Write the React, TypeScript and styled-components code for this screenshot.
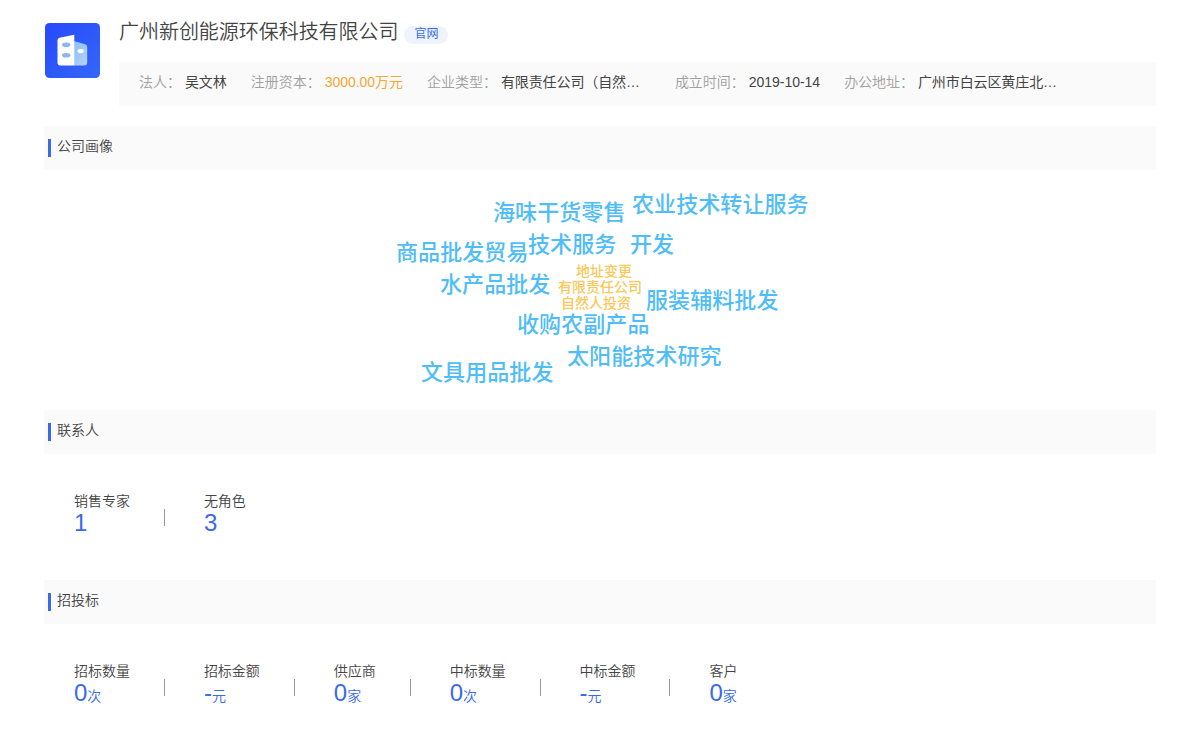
import React from "react";
import styled, { createGlobalStyle } from "styled-components";

const GlobalStyle = createGlobalStyle`
  * { box-sizing: border-box; }
  body {
    margin: 0;
    background: #fff;
    color: #444;
    font-family: "Liberation Sans", "Noto Sans CJK SC", sans-serif;
    font-size: 14px;
    line-height: 20px;
  }
`;

const Page = styled.main`
  width: 1200px;
  height: 752px;
  padding: 20px 44px 0;
  overflow: hidden;
`;

const Header = styled.header`
  display: flex;
  height: 86px;
`;

const Logo = styled.svg`
  width: 55px;
  height: 55px;
  margin: 3px 19px 0 1px;
  flex: none;
`;

const Summary = styled.div`
  flex: 1;
  min-width: 0;
`;

const TitleRow = styled.div`
  display: flex;
  align-items: flex-start;
  height: 42px;
`;

const Title = styled.h1`
  margin: 0;
  font-size: 20px;
  line-height: 24px;
  font-weight: 350;
  letter-spacing: -0.04px;
  color: #444;
`;

const SiteTag = styled.span`
  margin: 6px 0 0 6px;
  width: 44px;
  height: 18px;
  border-radius: 9px;
  background: #eef4fd;
  color: #3a6aea;
  font-size: 12px;
  line-height: 17px;
  text-align: center;
`;

const InfoBar = styled.div`
  display: flex;
  gap: 24px;
  height: 44px;
  padding: 10px 20px;
  background: #fafafa;
  white-space: nowrap;
`;

const InfoItem = styled.div`
  display: flex;
  gap: 4px;
`;

const InfoLabel = styled.span`
  color: #a0a0a0;
  font-weight: 350;
  letter-spacing: -0.04px;
`;

const InfoValue = styled.span<{ $accent?: boolean; $clipped?: boolean }>`
  color: ${(p) => (p.$accent ? "#f5a633" : "#444")};
  width: ${(p) => (p.$clipped ? "150px" : "auto")};
  letter-spacing: ${(p) => (p.$clipped ? "-0.1px" : "-0.02px")};
`;

const SectionTitle = styled.h2`
  display: flex;
  height: 44px;
  margin: 0;
  padding: 10px 4px;
  gap: 6px;
  background: #fafafa;
  font-size: 14px;
  font-weight: 350;
  line-height: 20px;
  color: #444;

  &::before {
    content: "";
    width: 3px;
    height: 18px;
    margin-top: 3px;
    background: #3a6aea;
  }
`;

const Section = styled.section<{ $height: number; $top?: number }>`
  height: ${(p) => p.$height}px;
  margin-top: ${(p) => p.$top ?? 0}px;
`;

const Cloud = styled.div`
  position: relative;
  height: 240px;
`;

const Word = styled.span<{ $x: number; $y: number; $small?: boolean }>`
  position: absolute;
  left: ${(p) => p.$x}px;
  top: ${(p) => p.$y}px;
  transform: translateY(-50%);
  white-space: nowrap;
  font-weight: 500;
  font-size: ${(p) => (p.$small ? 14 : 22)}px;
  line-height: ${(p) => (p.$small ? 16 : 24)}px;
  letter-spacing: ${(p) => (p.$small ? 0 : 0.08)}px;
  color: ${(p) => (p.$small ? "#fac858" : "#4fbdf8")};
`;

const StatRow = styled.div`
  display: flex;
  padding: 37px 30px 0;
`;

const Stat = styled.div`
  display: flex;
  font-weight: 350;

  & + &::before {
    content: "";
    width: 1px;
    height: 17px;
    margin: 18px 39px 0 34px;
    background: #999;
  }
`;

const StatLabel = styled.div`
  color: #444;
  line-height: 20px;
  letter-spacing: -0.03px;
`;

const StatValue = styled.div`
  color: #3a6aea;
  font-size: 24px;
  line-height: 24px;
`;

const Unit = styled.span`
  font-size: 14px;
`;

const info = [
  { label: "法人：", value: "吴文林" },
  { label: "注册资本：", value: "3000.00万元", accent: true },
  { label: "企业类型：", value: "有限责任公司（自然…", clipped: true },
  { label: "成立时间：", value: "2019-10-14" },
  { label: "办公地址：", value: "广州市白云区黄庄北…", clipped: true },
];

const words = [
  { text: "农业技术转让服务", x: 588, y: 35 },
  { text: "海味干货零售", x: 449, y: 43 },
  { text: "技术服务", x: 484, y: 75 },
  { text: "开发", x: 586, y: 75 },
  { text: "商品批发贸易", x: 352, y: 83 },
  { text: "地址变更", x: 532, y: 101, small: true },
  { text: "水产品批发", x: 396, y: 115 },
  { text: "有限责任公司", x: 514, y: 117, small: true },
  { text: "服装辅料批发", x: 602, y: 131 },
  { text: "自然人投资", x: 517, y: 133, small: true },
  { text: "收购农副产品", x: 473, y: 155 },
  { text: "太阳能技术研究", x: 523, y: 187 },
  { text: "文具用品批发", x: 377, y: 203 },
];

const contacts = [
  { label: "销售专家", value: "1" },
  { label: "无角色", value: "3" },
];

const bids = [
  { label: "招标数量", value: "0", unit: "次" },
  { label: "招标金额", value: "-", unit: "元" },
  { label: "供应商", value: "0", unit: "家" },
  { label: "中标数量", value: "0", unit: "次" },
  { label: "中标金额", value: "-", unit: "元" },
  { label: "客户", value: "0", unit: "家" },
];

function Stats({ items }: { items: { label: string; value: string; unit?: string }[] }) {
  return (
    <StatRow>
      {items.map((s) => (
        <Stat key={s.label}>
          <div>
            <StatLabel>{s.label}</StatLabel>
            <StatValue>
              {s.value}
              {s.unit && <Unit>{s.unit}</Unit>}
            </StatValue>
          </div>
        </Stat>
      ))}
    </StatRow>
  );
}

export default function App() {
  return (
    <Page>
      <GlobalStyle />
      <Header>
        <Logo viewBox="0 0 55 55">
          <defs>
            <linearGradient id="tile" x1="0" y1="0" x2="1" y2="1">
              <stop offset="0" stopColor="#2748fb" />
              <stop offset="1" stopColor="#3468f8" />
            </linearGradient>
            <linearGradient id="wing" x1="0" y1="0" x2="1" y2="1">
              <stop offset="0" stopColor="#8fbcf8" />
              <stop offset="1" stopColor="#b4d4fb" />
            </linearGradient>
          </defs>
          <rect width="55" height="55" rx="4.500" fill="url(#tile)" />
          <path d="M29 18l11.200 3.200q2 .6 2 2.600V39.500q0 3-3 3H29z" fill="url(#wing)" />
          <path d="M14.500 14.800L29.300 11.800V42.500H15.500q-3 0-3-3V17.300q0-2 2-2.500z" fill="#fff" />
          <ellipse cx="21.200" cy="21.800" rx="4.200" ry="2.300" fill="#8db5f4" />
          <ellipse cx="21.200" cy="32.200" rx="4.200" ry="2.300" fill="#8db5f4" />
          <ellipse cx="35.700" cy="28.100" rx="3.200" ry="2.100" fill="#fff" />
        </Logo>
        <Summary>
          <TitleRow>
            <Title>广州新创能源环保科技有限公司</Title>
            <SiteTag>官网</SiteTag>
          </TitleRow>
          <InfoBar>
            {info.map((i) => (
              <InfoItem key={i.label}>
                <InfoLabel>{i.label}</InfoLabel>
                <InfoValue $accent={i.accent} $clipped={i.clipped}>
                  {i.value}
                </InfoValue>
              </InfoItem>
            ))}
          </InfoBar>
        </Summary>
      </Header>

      <Section $height={284} $top={20}>
        <SectionTitle>公司画像</SectionTitle>
        <Cloud>
          {words.map((w) => (
            <Word key={w.text} $x={w.x} $y={w.y} $small={w.small}>
              {w.text}
            </Word>
          ))}
        </Cloud>
      </Section>

      <Section $height={170}>
        <SectionTitle>联系人</SectionTitle>
        <Stats items={contacts} />
      </Section>

      <Section $height={170}>
        <SectionTitle>招投标</SectionTitle>
        <Stats items={bids} />
      </Section>
    </Page>
  );
}
